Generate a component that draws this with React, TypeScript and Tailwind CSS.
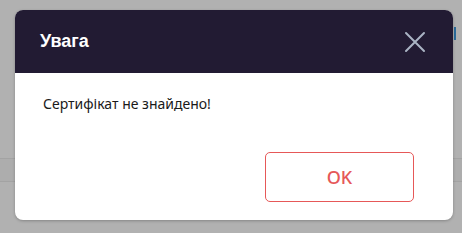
import React from "react";

export default function App() {
  return (
    <div className="relative w-[462px] h-[233px] overflow-hidden bg-[#b1b1b1]" style={{ fontFamily: '"Noto Sans", "Open Sans", sans-serif' }}>
      {/* underlying page seen through overlay */}
      <div className="flex flex-col">
        <div className="h-[158px]" />
        <div className="h-[24px] border-t border-b border-[#a3a3a3] bg-[#adadad]" />
      </div>
      <div className="absolute left-[454px] top-[27px] w-[2px] h-[13px] bg-[#2a6a9a]" />

      {/* dialog */}
      <div className="absolute left-[15px] top-[10px] w-[438px] h-[210px] bg-white rounded-[8px] overflow-hidden shadow-[0_1px_3px_rgba(0,0,0,0.25)] flex flex-col">
        <div className="h-[63px] bg-[#221b33] flex items-center justify-between pl-[25px] pr-[27px]">
          <span className="text-white text-[18px] font-bold" style={{ fontFamily: '"Liberation Sans", Arial, sans-serif' }}>
            Увага
          </span>
          <svg width="22" height="22" viewBox="0 0 22 22" className="mt-[1px]">
            <path d="M2 2 L20 20 M20 2 L2 20" stroke="#aab4c4" strokeWidth="2" strokeLinecap="round" />
          </svg>
        </div>
        <div className="flex-1 flex flex-col px-[28px] pt-[21px]">
          <p className="text-[14px] text-[#1a1a1a] leading-[20px]">Сертифікат не знайдено!</p>
          <div className="flex justify-end mt-[38px] pr-[11px]">
            <button className="w-[149px] h-[50px] border border-[#e65858] rounded-[5px] text-[#e65858] text-[18px] font-medium flex items-center justify-center pt-[1px]">
              OK
            </button>
          </div>
        </div>
      </div>
    </div>
  );
}
